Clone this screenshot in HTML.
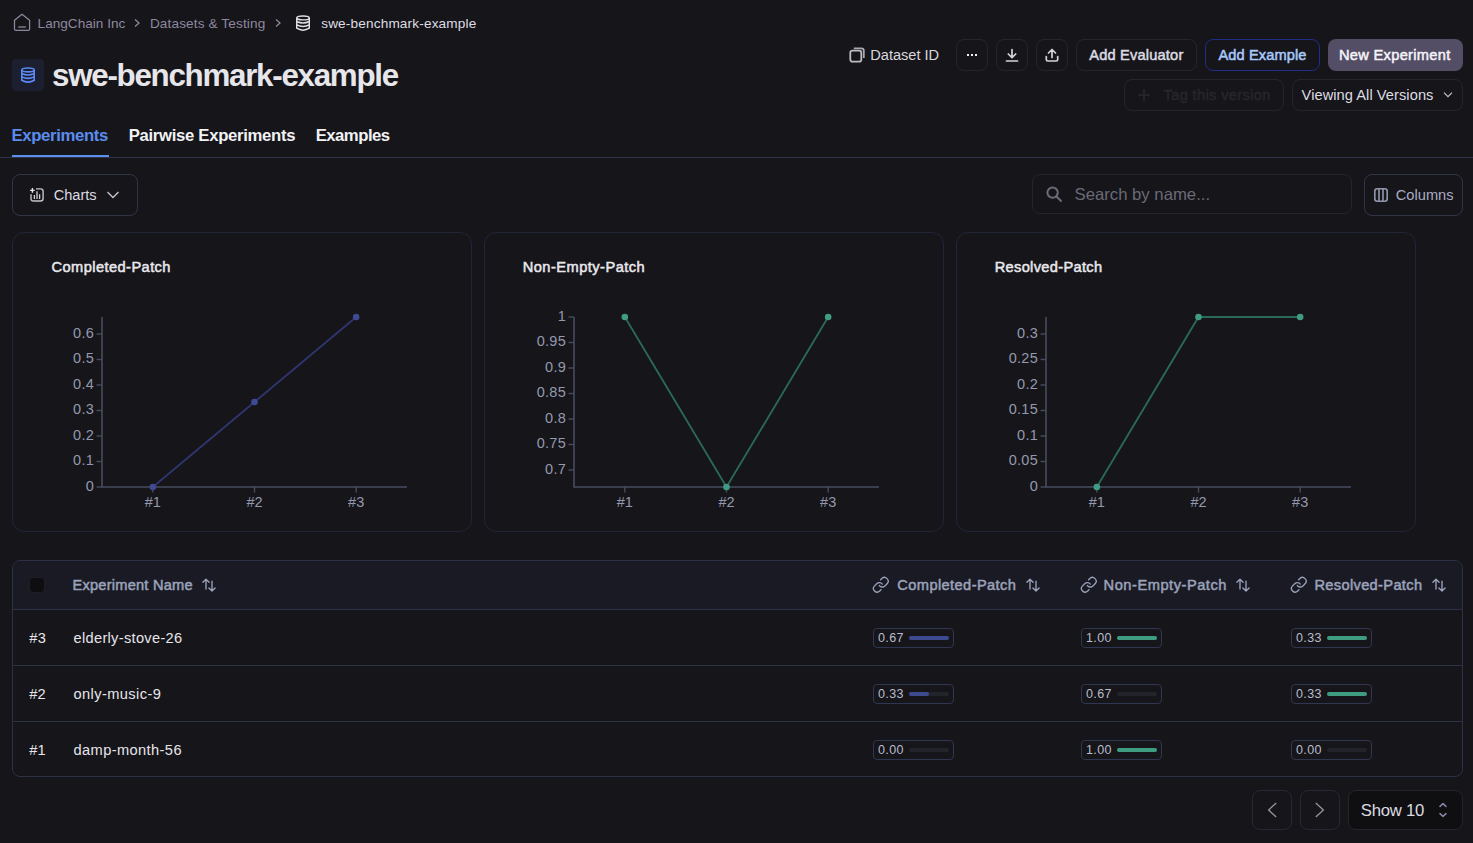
<!DOCTYPE html>
<html><head><meta charset="utf-8"><title>swe-benchmark-example</title>
<style>
html,body{margin:0;padding:0;}
body{width:1473px;height:843px;background:#16151a;position:relative;overflow:hidden;font-family:"Liberation Sans", sans-serif;}
.t{position:absolute;white-space:nowrap;}
.b{position:absolute;}
svg text{font-family:"Liberation Sans", sans-serif;}
</style></head><body>
<svg class="b" style="left:13px;top:13px" width="18" height="19" viewBox="0 0 18 19" fill="none"><path d="M1.5 7.3 L9 1.3 L16.6 7.3 V15.9 Q16.6 17.4 15.1 17.4 H3 Q1.5 17.4 1.5 15.9 Z" stroke="#8d889f" stroke-width="1.25" stroke-linejoin="round"/><path d="M5.3 14 H12.8" stroke="#8d889f" stroke-width="1.3"/></svg>
<div class="t" style="left:37.60px;top:16.50px;font-size:13.58px;line-height:13.58px;color:#8d889f;font-weight:400;letter-spacing:0.015px;">LangChain Inc</div>
<svg class="b" style="left:133px;top:18px" width="8" height="10" viewBox="0 0 8 10" fill="none"><path d="M2 1.5 L6 5 L2 8.5" stroke="#8d889f" stroke-width="1.3" fill="none"/></svg>
<div class="t" style="left:149.90px;top:16.50px;font-size:13.58px;line-height:13.58px;color:#8d889f;font-weight:400;letter-spacing:0.14px;">Datasets &amp; Testing</div>
<svg class="b" style="left:274px;top:18px" width="8" height="10" viewBox="0 0 8 10" fill="none"><path d="M2 1.5 L6 5 L2 8.5" stroke="#8d889f" stroke-width="1.3" fill="none"/></svg>
<svg class="b" style="left:296px;top:15px" width="14" height="16" viewBox="0 0 14 16" fill="none"><ellipse cx="7" cy="2.9" rx="6.275" ry="1.95" stroke="#e2e1e8" stroke-width="1.45"/><path d="M0.725 2.9 V13.2 Q7 17.1 13.275 13.2 V2.9" stroke="#e2e1e8" stroke-width="1.45"/><path d="M0.725 6.5 Q7 9.5 13.275 6.5" stroke="#e2e1e8" stroke-width="1.45"/><path d="M0.725 9.9 Q7 12.9 13.275 9.9" stroke="#e2e1e8" stroke-width="1.45"/></svg>
<div class="t" style="left:321.20px;top:16.50px;font-size:13.58px;line-height:13.58px;color:#dedde3;font-weight:400;letter-spacing:0.17px;">swe-benchmark-example</div>
<div class="b" style="left:12px;top:59px;width:32px;height:32px;background:#1c1f2f;border-radius:4px"></div>
<svg class="b" style="left:21px;top:67px" width="14" height="16" viewBox="0 0 14 16" fill="none"><ellipse cx="7" cy="2.9" rx="6.2" ry="1.95" stroke="#5b8af5" stroke-width="1.6"/><path d="M0.8 2.9 V13.2 Q7 17.1 13.2 13.2 V2.9" stroke="#5b8af5" stroke-width="1.6"/><path d="M0.8 6.5 Q7 9.5 13.2 6.5" stroke="#5b8af5" stroke-width="1.6"/><path d="M0.8 9.9 Q7 12.9 13.2 9.9" stroke="#5b8af5" stroke-width="1.6"/></svg>
<div class="t" style="left:52.10px;top:59.86px;font-size:31.35px;line-height:31.35px;color:#e7e6eb;font-weight:700;letter-spacing:-1.29px;">swe-benchmark-example</div>
<div class="t" style="left:11.50px;top:127.85px;font-size:16.72px;line-height:16.72px;color:#5b8def;font-weight:700;letter-spacing:-0.34px;">Experiments</div>
<div class="t" style="left:128.70px;top:127.85px;font-size:16.72px;line-height:16.72px;color:#f2f2f4;font-weight:700;letter-spacing:-0.307px;">Pairwise Experiments</div>
<div class="t" style="left:315.70px;top:127.85px;font-size:16.72px;line-height:16.72px;color:#f2f2f4;font-weight:700;letter-spacing:-0.514px;">Examples</div>
<div class="b" style="left:0px;top:157px;width:1473px;height:1px;background:#2f3447"></div>
<div class="b" style="left:12px;top:155px;width:97px;height:2px;background:#5b8def"></div>
<svg class="b" style="left:848px;top:46px" width="18" height="18" viewBox="0 0 18 18" fill="none"><rect x="2.3" y="4.7" width="11" height="11" rx="2.2" stroke="#bdbcc3" stroke-width="1.8"/><path d="M5.8 2.4 H13.4 Q15.8 2.4 15.8 4.8 V12" stroke="#a9a8af" stroke-width="1.8"/></svg>
<div class="t" style="left:870.30px;top:48.02px;font-size:14.63px;line-height:14.63px;color:#d9d8de;font-weight:400;letter-spacing:-0.042px;">Dataset ID</div>
<div class="b" style="left:956px;top:39px;width:32px;height:32px;border:1px solid #26252d;border-radius:8px;box-sizing:border-box"></div>
<div class="b" style="left:996px;top:39px;width:32px;height:32px;border:1px solid #26252d;border-radius:8px;box-sizing:border-box"></div>
<div class="b" style="left:1036px;top:39px;width:32px;height:32px;border:1px solid #26252d;border-radius:8px;box-sizing:border-box"></div>
<svg class="b" style="left:964px;top:47px" width="16" height="16" viewBox="0 0 16 16" fill="none"><rect x="3" y="7" width="2" height="2" fill="#f2f1f5"/><rect x="7" y="7" width="2" height="2" fill="#f2f1f5"/><rect x="11" y="7" width="2" height="2" fill="#f2f1f5"/></svg>
<svg class="b" style="left:1004px;top:47px" width="16" height="16" viewBox="0 0 16 16" fill="none"><path d="M8 2.5 V10.5 M4.3 7 L8 10.7 L11.7 7" stroke="#d4d3d9" stroke-width="1.7" stroke-linecap="round" stroke-linejoin="round"/><path d="M2.5 14 H13.5" stroke="#d4d3d9" stroke-width="1.7" stroke-linecap="round"/></svg>
<svg class="b" style="left:1044px;top:47px" width="16" height="16" viewBox="0 0 16 16" fill="none"><path d="M8 10.5 V2.8 M4.5 6 L8 2.5 L11.5 6" stroke="#d4d3d9" stroke-width="1.7" stroke-linecap="round" stroke-linejoin="round"/><path d="M2.3 9.5 V12.5 Q2.3 14 3.8 14 H12.2 Q13.7 14 13.7 12.5 V9.5" stroke="#d4d3d9" stroke-width="1.7" stroke-linecap="round"/></svg>
<div class="b" style="left:1076px;top:39px;width:121px;height:32px;border:1px solid #26252d;border-radius:8px;box-sizing:border-box"></div>
<div class="t" style="left:1089.20px;top:48.02px;font-size:14.63px;line-height:14.63px;color:#dcdbe0;font-weight:400;-webkit-text-stroke:0.5px #dcdbe0;letter-spacing:0.183px;">Add Evaluator</div>
<div class="b" style="left:1205px;top:39px;width:115px;height:32px;border:1px solid #1f2c88;border-radius:8px;box-sizing:border-box"></div>
<div class="t" style="left:1218.50px;top:48.02px;font-size:14.63px;line-height:14.63px;color:#a9c9fb;font-weight:400;-webkit-text-stroke:0.5px #a9c9fb;letter-spacing:0.1px;">Add Example</div>
<div class="b" style="left:1328px;top:39px;width:135px;height:32px;background:#534d66;border-radius:8px"></div>
<div class="t" style="left:1339.00px;top:48.02px;font-size:14.63px;line-height:14.63px;color:#f4f3f7;font-weight:400;-webkit-text-stroke:0.5px #f4f3f7;letter-spacing:0.308px;">New Experiment</div>
<div class="b" style="left:1124px;top:79px;width:160px;height:32px;border:1px solid #26252c;border-radius:8px;box-sizing:border-box"></div>
<svg class="b" style="left:1136px;top:87px" width="16" height="16" viewBox="0 0 16 16" fill="none"><path d="M8 2.5 V13.5 M2.5 8 H13.5" stroke="#29282f" stroke-width="1.6" stroke-linecap="round"/></svg>
<div class="t" style="left:1163.60px;top:87.82px;font-size:14.63px;line-height:14.63px;color:#27262d;font-weight:400;-webkit-text-stroke:0.5px #27262d;letter-spacing:0.345px;">Tag this version</div>
<div class="b" style="left:1292px;top:79px;width:171px;height:32px;border:1px solid #26252d;border-radius:8px;box-sizing:border-box"></div>
<div class="t" style="left:1301.60px;top:87.82px;font-size:14.63px;line-height:14.63px;color:#dedde3;font-weight:400;letter-spacing:0.062px;">Viewing All Versions</div>
<svg class="b" style="left:1442px;top:90px" width="12" height="10" viewBox="0 0 12 10" fill="none"><path d="M2 2.7 L6 6.6 L10 2.7" stroke="#c8c7ce" stroke-width="1.15" fill="none"/></svg>
<div class="b" style="left:12px;top:174px;width:126px;height:42px;border:1px solid #2f3447;border-radius:8px;box-sizing:border-box"></div>
<svg class="b" style="left:29px;top:187px" width="16" height="16" viewBox="0 0 16 16" fill="none"><path d="M7 1.9 H11.6 Q14.1 1.9 14.1 4.4 V11.5 Q14.1 14 11.6 14 H4.5 Q2 14 2 11.5 V7.2" stroke="#c4c3ca" stroke-width="1.4"/><path d="M3.4 1.1 V5.7 M1.1 3.4 H5.7" stroke="#e6e5ea" stroke-width="1.4"/><path d="M5.4 12 V8 M8 12 V4.2 M10.6 12 V7.2" stroke="#cfced4" stroke-width="1.3"/></svg>
<div class="t" style="left:53.70px;top:187.82px;font-size:14.63px;line-height:14.63px;color:#dcdbe1;font-weight:400;letter-spacing:-0.04px;">Charts</div>
<svg class="b" style="left:105px;top:189px" width="16" height="12" viewBox="0 0 16 12" fill="none"><path d="M2.5 3 L8 8.5 L13.5 3" stroke="#c4c3ca" stroke-width="1.4" fill="none"/></svg>
<div class="b" style="left:1032px;top:174px;width:320px;height:40px;border:1px solid #25252c;border-radius:8px;box-sizing:border-box"></div>
<svg class="b" style="left:1045px;top:185px" width="18" height="18" viewBox="0 0 18 18" fill="none"><circle cx="7.6" cy="7.6" r="5.2" stroke="#6c6b78" stroke-width="2"/><path d="M11.5 11.5 L16 16" stroke="#6c6b78" stroke-width="2" stroke-linecap="round"/></svg>
<div class="t" style="left:1074.50px;top:187.05px;font-size:16.72px;line-height:16.72px;color:#6b6a77;font-weight:400;letter-spacing:0.0px;">Search by name...</div>
<div class="b" style="left:1364px;top:174px;width:99px;height:42px;border:1px solid #2f3447;border-radius:8px;box-sizing:border-box"></div>
<svg class="b" style="left:1373px;top:187px" width="16" height="16" viewBox="0 0 16 16" fill="none"><rect x="1.8" y="1.8" width="12.4" height="12.4" rx="2.5" stroke="#9197ad" stroke-width="1.6"/><path d="M6 2 V14 M10 2 V14" stroke="#9197ad" stroke-width="1.6"/></svg>
<div class="t" style="left:1395.80px;top:187.62px;font-size:14.63px;line-height:14.63px;color:#a8adc1;font-weight:400;letter-spacing:0.0px;">Columns</div>
<div class="b" style="left:12px;top:232px;width:460px;height:300px;border:1px solid #202538;border-radius:12px;box-sizing:border-box"></div>
<div class="t" style="left:51.50px;top:259.62px;font-size:14.63px;line-height:14.63px;color:#e9e8ec;font-weight:400;-webkit-text-stroke:0.5px #e9e8ec;letter-spacing:0.429px;">Completed-Patch</div>
<svg class="b" style="left:0;top:0" width="1473" height="843" font-family="Liberation Sans"><path d="M102 317 V487 H407" stroke="#464c60" stroke-width="1.6" fill="none"/><path d="M96.5 487.00 H102" stroke="#464c60" stroke-width="1.4"/><text x="94" y="490.80" text-anchor="end" font-size="14.5" fill="#9499ad" letter-spacing="0.25">0</text><path d="M96.5 461.50 H102" stroke="#464c60" stroke-width="1.4"/><text x="94" y="465.30" text-anchor="end" font-size="14.5" fill="#9499ad" letter-spacing="0.25">0.1</text><path d="M96.5 436.00 H102" stroke="#464c60" stroke-width="1.4"/><text x="94" y="439.80" text-anchor="end" font-size="14.5" fill="#9499ad" letter-spacing="0.25">0.2</text><path d="M96.5 410.50 H102" stroke="#464c60" stroke-width="1.4"/><text x="94" y="414.30" text-anchor="end" font-size="14.5" fill="#9499ad" letter-spacing="0.25">0.3</text><path d="M96.5 385.01 H102" stroke="#464c60" stroke-width="1.4"/><text x="94" y="388.81" text-anchor="end" font-size="14.5" fill="#9499ad" letter-spacing="0.25">0.4</text><path d="M96.5 359.51 H102" stroke="#464c60" stroke-width="1.4"/><text x="94" y="363.31" text-anchor="end" font-size="14.5" fill="#9499ad" letter-spacing="0.25">0.5</text><path d="M96.5 334.01 H102" stroke="#464c60" stroke-width="1.4"/><text x="94" y="337.81" text-anchor="end" font-size="14.5" fill="#9499ad" letter-spacing="0.25">0.6</text><path d="M152.83 487 V492.5" stroke="#464c60" stroke-width="1.4"/><text x="152.83" y="507" text-anchor="middle" font-size="14.5" fill="#9499ad">#1</text><path d="M254.50 487 V492.5" stroke="#464c60" stroke-width="1.4"/><text x="254.50" y="507" text-anchor="middle" font-size="14.5" fill="#9499ad">#2</text><path d="M356.17 487 V492.5" stroke="#464c60" stroke-width="1.4"/><text x="356.17" y="507" text-anchor="middle" font-size="14.5" fill="#9499ad">#3</text><polyline points="152.83,487.00 254.50,402.01 356.17,317.00" stroke="#2f366e" stroke-width="1.8" fill="none"/><circle cx="152.83" cy="487.00" r="3.3" fill="#3f4a93"/><circle cx="254.50" cy="402.01" r="3.3" fill="#3f4a93"/><circle cx="356.17" cy="317.00" r="3.3" fill="#3f4a93"/></svg>
<div class="b" style="left:484px;top:232px;width:460px;height:300px;border:1px solid #202538;border-radius:12px;box-sizing:border-box"></div>
<div class="t" style="left:522.70px;top:259.62px;font-size:14.63px;line-height:14.63px;color:#e9e8ec;font-weight:400;-webkit-text-stroke:0.5px #e9e8ec;letter-spacing:0.47px;">Non-Empty-Patch</div>
<svg class="b" style="left:0;top:0" width="1473" height="843" font-family="Liberation Sans"><path d="M574 317 V487 H879" stroke="#464c60" stroke-width="1.6" fill="none"/><path d="M568.5 470.02 H574" stroke="#464c60" stroke-width="1.4"/><text x="566" y="473.82" text-anchor="end" font-size="14.5" fill="#9499ad" letter-spacing="0.25">0.7</text><path d="M568.5 444.51 H574" stroke="#464c60" stroke-width="1.4"/><text x="566" y="448.31" text-anchor="end" font-size="14.5" fill="#9499ad" letter-spacing="0.25">0.75</text><path d="M568.5 419.01 H574" stroke="#464c60" stroke-width="1.4"/><text x="566" y="422.81" text-anchor="end" font-size="14.5" fill="#9499ad" letter-spacing="0.25">0.8</text><path d="M568.5 393.51 H574" stroke="#464c60" stroke-width="1.4"/><text x="566" y="397.31" text-anchor="end" font-size="14.5" fill="#9499ad" letter-spacing="0.25">0.85</text><path d="M568.5 368.01 H574" stroke="#464c60" stroke-width="1.4"/><text x="566" y="371.81" text-anchor="end" font-size="14.5" fill="#9499ad" letter-spacing="0.25">0.9</text><path d="M568.5 342.50 H574" stroke="#464c60" stroke-width="1.4"/><text x="566" y="346.30" text-anchor="end" font-size="14.5" fill="#9499ad" letter-spacing="0.25">0.95</text><path d="M568.5 317.00 H574" stroke="#464c60" stroke-width="1.4"/><text x="566" y="320.80" text-anchor="end" font-size="14.5" fill="#9499ad" letter-spacing="0.25">1</text><path d="M624.83 487 V492.5" stroke="#464c60" stroke-width="1.4"/><text x="624.83" y="507" text-anchor="middle" font-size="14.5" fill="#9499ad">#1</text><path d="M726.50 487 V492.5" stroke="#464c60" stroke-width="1.4"/><text x="726.50" y="507" text-anchor="middle" font-size="14.5" fill="#9499ad">#2</text><path d="M828.17 487 V492.5" stroke="#464c60" stroke-width="1.4"/><text x="828.17" y="507" text-anchor="middle" font-size="14.5" fill="#9499ad">#3</text><polyline points="624.83,317.00 726.50,487.00 828.17,317.00" stroke="#2a6b57" stroke-width="1.8" fill="none"/><circle cx="624.83" cy="317.00" r="3.3" fill="#3f9c82"/><circle cx="726.50" cy="487.00" r="3.3" fill="#3f9c82"/><circle cx="828.17" cy="317.00" r="3.3" fill="#3f9c82"/></svg>
<div class="b" style="left:956px;top:232px;width:460px;height:300px;border:1px solid #202538;border-radius:12px;box-sizing:border-box"></div>
<div class="t" style="left:994.70px;top:259.62px;font-size:14.63px;line-height:14.63px;color:#e9e8ec;font-weight:400;-webkit-text-stroke:0.5px #e9e8ec;letter-spacing:0.321px;">Resolved-Patch</div>
<svg class="b" style="left:0;top:0" width="1473" height="843" font-family="Liberation Sans"><path d="M1046 317 V487 H1351" stroke="#464c60" stroke-width="1.6" fill="none"/><path d="M1040.5 487.00 H1046" stroke="#464c60" stroke-width="1.4"/><text x="1038" y="490.80" text-anchor="end" font-size="14.5" fill="#9499ad" letter-spacing="0.25">0</text><path d="M1040.5 461.50 H1046" stroke="#464c60" stroke-width="1.4"/><text x="1038" y="465.30" text-anchor="end" font-size="14.5" fill="#9499ad" letter-spacing="0.25">0.05</text><path d="M1040.5 435.99 H1046" stroke="#464c60" stroke-width="1.4"/><text x="1038" y="439.79" text-anchor="end" font-size="14.5" fill="#9499ad" letter-spacing="0.25">0.1</text><path d="M1040.5 410.49 H1046" stroke="#464c60" stroke-width="1.4"/><text x="1038" y="414.29" text-anchor="end" font-size="14.5" fill="#9499ad" letter-spacing="0.25">0.15</text><path d="M1040.5 384.99 H1046" stroke="#464c60" stroke-width="1.4"/><text x="1038" y="388.79" text-anchor="end" font-size="14.5" fill="#9499ad" letter-spacing="0.25">0.2</text><path d="M1040.5 359.49 H1046" stroke="#464c60" stroke-width="1.4"/><text x="1038" y="363.29" text-anchor="end" font-size="14.5" fill="#9499ad" letter-spacing="0.25">0.25</text><path d="M1040.5 333.98 H1046" stroke="#464c60" stroke-width="1.4"/><text x="1038" y="337.78" text-anchor="end" font-size="14.5" fill="#9499ad" letter-spacing="0.25">0.3</text><path d="M1096.83 487 V492.5" stroke="#464c60" stroke-width="1.4"/><text x="1096.83" y="507" text-anchor="middle" font-size="14.5" fill="#9499ad">#1</text><path d="M1198.50 487 V492.5" stroke="#464c60" stroke-width="1.4"/><text x="1198.50" y="507" text-anchor="middle" font-size="14.5" fill="#9499ad">#2</text><path d="M1300.17 487 V492.5" stroke="#464c60" stroke-width="1.4"/><text x="1300.17" y="507" text-anchor="middle" font-size="14.5" fill="#9499ad">#3</text><polyline points="1096.83,487.00 1198.50,317.00 1300.17,317.00" stroke="#2a6b57" stroke-width="1.8" fill="none"/><circle cx="1096.83" cy="487.00" r="3.3" fill="#3f9c82"/><circle cx="1198.50" cy="317.00" r="3.3" fill="#3f9c82"/><circle cx="1300.17" cy="317.00" r="3.3" fill="#3f9c82"/></svg>
<div class="b" style="left:12px;top:560px;width:1451px;height:217px;border:1px solid #2c3146;border-radius:8px;box-sizing:border-box;overflow:hidden"></div>
<div class="b" style="left:13px;top:561px;width:1449px;height:48px;background:#1a1a24;border-radius:7px 7px 0 0"></div>
<div class="b" style="left:13px;top:609px;width:1449px;height:1px;background:#2c3146"></div>
<div class="b" style="left:13px;top:665px;width:1449px;height:1px;background:#2c3146"></div>
<div class="b" style="left:13px;top:721px;width:1449px;height:1px;background:#2c3146"></div>
<div class="b" style="left:29px;top:577px;width:16px;height:16px;background:#0e0e11;border:1px solid #1e1e25;border-radius:4px;box-sizing:border-box"></div>
<div class="t" style="left:72.50px;top:577.62px;font-size:14.63px;line-height:14.63px;color:#9ba2bb;font-weight:400;-webkit-text-stroke:0.5px #9ba2bb;letter-spacing:0.214px;">Experiment Name</div>
<svg class="b" style="left:195.9px;top:572px" width="26" height="26" viewBox="0 0 26 26" fill="none"><path d="M10 17 V7.6 M6.9 10.3 L10 7.2 L13.1 10.3" stroke="#9ba2bb" stroke-width="1.35" stroke-linecap="round" stroke-linejoin="round"/><path d="M16 9.2 V18.6 M12.9 15.9 L16 19 L19.1 15.9" stroke="#9ba2bb" stroke-width="1.35" stroke-linecap="round" stroke-linejoin="round"/></svg>
<svg class="b" style="left:872.23px;top:576.23px" width="17.64" height="17.64" viewBox="0 0 24 24" fill="none"><path d="M10 13a5 5 0 0 0 7.54.54l3-3a5 5 0 0 0-7.07-7.07l-1.72 1.71" stroke="#9ba2bb" stroke-width="1.8" stroke-linecap="round" stroke-linejoin="round"/><path d="M14 11a5 5 0 0 0-7.54-.54l-3 3a5 5 0 0 0 7.07 7.07l1.71-1.71" stroke="#9ba2bb" stroke-width="1.8" stroke-linecap="round" stroke-linejoin="round"/></svg>
<div class="t" style="left:897.30px;top:577.62px;font-size:14.63px;line-height:14.63px;color:#9ba2bb;font-weight:400;-webkit-text-stroke:0.5px #9ba2bb;letter-spacing:0.402px;">Completed-Patch</div>
<svg class="b" style="left:1019.7px;top:572px" width="26" height="26" viewBox="0 0 26 26" fill="none"><path d="M10 17 V7.6 M6.9 10.3 L10 7.2 L13.1 10.3" stroke="#9ba2bb" stroke-width="1.35" stroke-linecap="round" stroke-linejoin="round"/><path d="M16 9.2 V18.6 M12.9 15.9 L16 19 L19.1 15.9" stroke="#9ba2bb" stroke-width="1.35" stroke-linecap="round" stroke-linejoin="round"/></svg>
<svg class="b" style="left:1080.23px;top:576.23px" width="17.64" height="17.64" viewBox="0 0 24 24" fill="none"><path d="M10 13a5 5 0 0 0 7.54.54l3-3a5 5 0 0 0-7.07-7.07l-1.72 1.71" stroke="#9ba2bb" stroke-width="1.8" stroke-linecap="round" stroke-linejoin="round"/><path d="M14 11a5 5 0 0 0-7.54-.54l-3 3a5 5 0 0 0 7.07 7.07l1.71-1.71" stroke="#9ba2bb" stroke-width="1.8" stroke-linecap="round" stroke-linejoin="round"/></svg>
<div class="t" style="left:1103.60px;top:577.62px;font-size:14.63px;line-height:14.63px;color:#9ba2bb;font-weight:400;-webkit-text-stroke:0.5px #9ba2bb;letter-spacing:0.53px;">Non-Empty-Patch</div>
<svg class="b" style="left:1229.7px;top:572px" width="26" height="26" viewBox="0 0 26 26" fill="none"><path d="M10 17 V7.6 M6.9 10.3 L10 7.2 L13.1 10.3" stroke="#9ba2bb" stroke-width="1.35" stroke-linecap="round" stroke-linejoin="round"/><path d="M16 9.2 V18.6 M12.9 15.9 L16 19 L19.1 15.9" stroke="#9ba2bb" stroke-width="1.35" stroke-linecap="round" stroke-linejoin="round"/></svg>
<svg class="b" style="left:1290.23px;top:576.23px" width="17.64" height="17.64" viewBox="0 0 24 24" fill="none"><path d="M10 13a5 5 0 0 0 7.54.54l3-3a5 5 0 0 0-7.07-7.07l-1.72 1.71" stroke="#9ba2bb" stroke-width="1.8" stroke-linecap="round" stroke-linejoin="round"/><path d="M14 11a5 5 0 0 0-7.54-.54l-3 3a5 5 0 0 0 7.07 7.07l1.71-1.71" stroke="#9ba2bb" stroke-width="1.8" stroke-linecap="round" stroke-linejoin="round"/></svg>
<div class="t" style="left:1314.40px;top:577.62px;font-size:14.63px;line-height:14.63px;color:#9ba2bb;font-weight:400;-webkit-text-stroke:0.5px #9ba2bb;letter-spacing:0.341px;">Resolved-Patch</div>
<svg class="b" style="left:1426px;top:572px" width="26" height="26" viewBox="0 0 26 26" fill="none"><path d="M10 17 V7.6 M6.9 10.3 L10 7.2 L13.1 10.3" stroke="#9ba2bb" stroke-width="1.35" stroke-linecap="round" stroke-linejoin="round"/><path d="M16 9.2 V18.6 M12.9 15.9 L16 19 L19.1 15.9" stroke="#9ba2bb" stroke-width="1.35" stroke-linecap="round" stroke-linejoin="round"/></svg>
<div class="t" style="left:29.30px;top:630.62px;font-size:14.63px;line-height:14.63px;color:#e6e5ea;font-weight:400;letter-spacing:0.2px;">#3</div>
<div class="t" style="left:73.50px;top:630.62px;font-size:14.63px;line-height:14.63px;color:#e6e5ea;font-weight:400;letter-spacing:0.307px;">elderly-stove-26</div>
<div class="b" style="left:873px;top:628px;width:81px;height:20px;border:1px solid #313650;border-radius:4px;box-sizing:border-box"></div>
<div class="t" style="left:878.00px;top:631.52px;font-size:12.5px;line-height:12.5px;color:#b8bccb;font-weight:400;letter-spacing:0.4px;">0.67</div>
<div class="b" style="left:909px;top:636px;width:40px;height:4px;background:#23242b;border-radius:2px"></div>
<div class="b" style="left:909px;top:636px;width:40.0px;height:4px;background:#3d4a8f;border-radius:2px"></div>
<div class="b" style="left:1081px;top:628px;width:81px;height:20px;border:1px solid #313650;border-radius:4px;box-sizing:border-box"></div>
<div class="t" style="left:1086.00px;top:631.52px;font-size:12.5px;line-height:12.5px;color:#b8bccb;font-weight:400;letter-spacing:0.4px;">1.00</div>
<div class="b" style="left:1117px;top:636px;width:40px;height:4px;background:#23242b;border-radius:2px"></div>
<div class="b" style="left:1117px;top:636px;width:40.0px;height:4px;background:#3f9c80;border-radius:2px"></div>
<div class="b" style="left:1291px;top:628px;width:81px;height:20px;border:1px solid #313650;border-radius:4px;box-sizing:border-box"></div>
<div class="t" style="left:1296.00px;top:631.52px;font-size:12.5px;line-height:12.5px;color:#b8bccb;font-weight:400;letter-spacing:0.4px;">0.33</div>
<div class="b" style="left:1327px;top:636px;width:40px;height:4px;background:#23242b;border-radius:2px"></div>
<div class="b" style="left:1327px;top:636px;width:40.0px;height:4px;background:#3f9c80;border-radius:2px"></div>
<div class="t" style="left:29.20px;top:686.62px;font-size:14.63px;line-height:14.63px;color:#e6e5ea;font-weight:400;letter-spacing:0.2px;">#2</div>
<div class="t" style="left:73.50px;top:686.62px;font-size:14.63px;line-height:14.63px;color:#e6e5ea;font-weight:400;letter-spacing:0.401px;">only-music-9</div>
<div class="b" style="left:873px;top:684px;width:81px;height:20px;border:1px solid #313650;border-radius:4px;box-sizing:border-box"></div>
<div class="t" style="left:878.00px;top:687.52px;font-size:12.5px;line-height:12.5px;color:#b8bccb;font-weight:400;letter-spacing:0.4px;">0.33</div>
<div class="b" style="left:909px;top:692px;width:40px;height:4px;background:#23242b;border-radius:2px"></div>
<div class="b" style="left:909px;top:692px;width:20.0px;height:4px;background:#3d4a8f;border-radius:2px"></div>
<div class="b" style="left:1081px;top:684px;width:81px;height:20px;border:1px solid #313650;border-radius:4px;box-sizing:border-box"></div>
<div class="t" style="left:1086.00px;top:687.52px;font-size:12.5px;line-height:12.5px;color:#b8bccb;font-weight:400;letter-spacing:0.4px;">0.67</div>
<div class="b" style="left:1117px;top:692px;width:40px;height:4px;background:#23242b;border-radius:2px"></div>
<div class="b" style="left:1291px;top:684px;width:81px;height:20px;border:1px solid #313650;border-radius:4px;box-sizing:border-box"></div>
<div class="t" style="left:1296.00px;top:687.52px;font-size:12.5px;line-height:12.5px;color:#b8bccb;font-weight:400;letter-spacing:0.4px;">0.33</div>
<div class="b" style="left:1327px;top:692px;width:40px;height:4px;background:#23242b;border-radius:2px"></div>
<div class="b" style="left:1327px;top:692px;width:40.0px;height:4px;background:#3f9c80;border-radius:2px"></div>
<div class="t" style="left:29.20px;top:742.62px;font-size:14.63px;line-height:14.63px;color:#e6e5ea;font-weight:400;letter-spacing:0.2px;">#1</div>
<div class="t" style="left:73.50px;top:742.62px;font-size:14.63px;line-height:14.63px;color:#e6e5ea;font-weight:400;letter-spacing:0.398px;">damp-month-56</div>
<div class="b" style="left:873px;top:740px;width:81px;height:20px;border:1px solid #313650;border-radius:4px;box-sizing:border-box"></div>
<div class="t" style="left:878.00px;top:743.52px;font-size:12.5px;line-height:12.5px;color:#b8bccb;font-weight:400;letter-spacing:0.4px;">0.00</div>
<div class="b" style="left:909px;top:748px;width:40px;height:4px;background:#23242b;border-radius:2px"></div>
<div class="b" style="left:1081px;top:740px;width:81px;height:20px;border:1px solid #313650;border-radius:4px;box-sizing:border-box"></div>
<div class="t" style="left:1086.00px;top:743.52px;font-size:12.5px;line-height:12.5px;color:#b8bccb;font-weight:400;letter-spacing:0.4px;">1.00</div>
<div class="b" style="left:1117px;top:748px;width:40px;height:4px;background:#23242b;border-radius:2px"></div>
<div class="b" style="left:1117px;top:748px;width:40.0px;height:4px;background:#3f9c80;border-radius:2px"></div>
<div class="b" style="left:1291px;top:740px;width:81px;height:20px;border:1px solid #313650;border-radius:4px;box-sizing:border-box"></div>
<div class="t" style="left:1296.00px;top:743.52px;font-size:12.5px;line-height:12.5px;color:#b8bccb;font-weight:400;letter-spacing:0.4px;">0.00</div>
<div class="b" style="left:1327px;top:748px;width:40px;height:4px;background:#23242b;border-radius:2px"></div>
<div class="b" style="left:1252px;top:790px;width:40px;height:40px;border:1px solid #242839;border-radius:8px;box-sizing:border-box"></div>
<div class="b" style="left:1300px;top:790px;width:40px;height:40px;border:1px solid #242839;border-radius:8px;box-sizing:border-box"></div>
<svg class="b" style="left:1264px;top:802px" width="16" height="16" viewBox="0 0 16 16" fill="none"><path d="M12.2 1 L4.6 8 L12.2 15" stroke="#9a98a3" stroke-width="1.25" fill="none"/></svg>
<svg class="b" style="left:1312px;top:802px" width="16" height="16" viewBox="0 0 16 16" fill="none"><path d="M3.8 1 L11.4 8 L3.8 15" stroke="#9a98a3" stroke-width="1.25" fill="none"/></svg>
<div class="b" style="left:1348px;top:790px;width:115px;height:40px;background:#0f0f12;border:1px solid #24242b;border-radius:8px;box-sizing:border-box"></div>
<div class="t" style="left:1360.80px;top:803.45px;font-size:16.72px;line-height:16.72px;color:#dcdbe1;font-weight:400;letter-spacing:-0.235px;">Show 10</div>
<svg class="b" style="left:1435px;top:800px" width="16" height="20" viewBox="0 0 16 20" fill="none"><path d="M5 6.4 L8 3.6 L11 6.4 M5 13.6 L8 16.4 L11 13.6" stroke="#8a82a6" stroke-width="1.5" fill="none" stroke-linecap="round" stroke-linejoin="round"/></svg>
</body></html>
